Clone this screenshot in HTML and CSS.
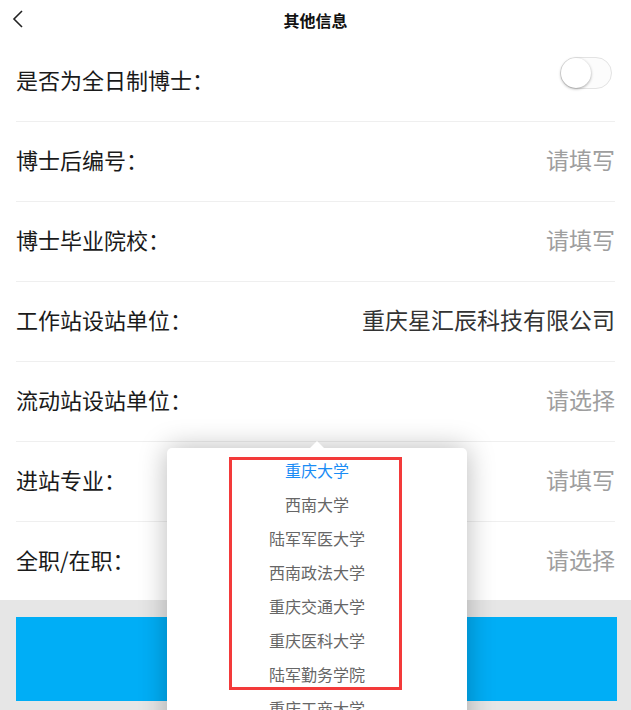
FILE: index.html
```html
<!DOCTYPE html>
<html lang="zh-CN">
<head>
  <meta charset="UTF-8">
  <title>其他信息</title>
  <link rel="stylesheet" href="styles.css">
</head>
<body>

  <div class="cabecera">
    <span class="volver">
      <svg width="12" height="18" viewBox="0 0 12 18"><path d="M10 1 L2 9 L10 17" fill="none" stroke="#222" stroke-width="1.6"/></svg>
    </span>
    <h1>其他信息</h1>
  </div>

  <div class="formulario">
    <div class="fila">
      <span class="etiqueta">是否为全日制博士：</span>
      <span class="interruptor"><span class="bola"></span></span>
    </div>
    <div class="fila">
      <span class="etiqueta">博士后编号：</span>
      <span class="valor vacio">请填写</span>
    </div>
    <div class="fila">
      <span class="etiqueta">博士毕业院校：</span>
      <span class="valor vacio">请填写</span>
    </div>
    <div class="fila">
      <span class="etiqueta">工作站设站单位：</span>
      <span class="valor">重庆星汇辰科技有限公司</span>
    </div>
    <div class="fila">
      <span class="etiqueta">流动站设站单位：</span>
      <span class="valor vacio">请选择</span>
    </div>
    <div class="fila">
      <span class="etiqueta">进站专业：</span>
      <span class="valor vacio">请填写</span>
    </div>
    <div class="fila">
      <span class="etiqueta">全职/在职：</span>
      <span class="valor vacio">请选择</span>
    </div>
  </div>

  <div class="pie">
    <div class="boton"></div>
  </div>

  <div class="desplegable">
    <ul>
      <li class="activo">重庆大学</li>
      <li>西南大学</li>
      <li>陆军军医大学</li>
      <li>西南政法大学</li>
      <li>重庆交通大学</li>
      <li>重庆医科大学</li>
      <li>陆军勤务学院</li>
      <li>重庆工商大学</li>
    </ul>
  </div>

  <div class="marca"></div>

</body>
</html>
```

FILE: styles.css
```css
html, body {
  margin: 0;
  height: 710px;
  overflow: hidden;
}

body {
  font-family: "Noto Sans CJK SC", "Noto Sans", sans-serif;
  background: #e6e6e6;
  color: #222;
  position: relative;
}

.cabecera {
  height: 42px;
  background: #fff;
  display: flex;
  align-items: center;
  justify-content: center;
  position: relative;
}

.cabecera h1 {
  margin: 0 0 3px;
  font-size: 16px;
  font-weight: bold;
  color: #111;
}

.volver {
  position: absolute;
  left: 12px;
  top: 9px;
}

.formulario {
  background: #fff;
  padding: 0 16px;
}

.fila {
  height: 80px;
  box-sizing: border-box;
  padding-bottom: 5px;
  display: flex;
  align-items: center;
  justify-content: space-between;
  border-bottom: 1px solid #efefef;
}

.fila:last-child {
  border-bottom: none;
  height: 78px;
}

.etiqueta {
  font-size: 22px;
  color: #1a1a1a;
}

.valor {
  font-size: 23px;
  color: #333;
}

.valor.vacio {
  color: #9e9e9e;
}

.interruptor {
  width: 50px;
  height: 30px;
  border: 1px solid #e3e3e3;
  border-radius: 16px;
  background: #fcfcfc;
  position: relative;
  margin: 0 3px 12px 0;
}

.bola {
  position: absolute;
  left: 0;
  top: 0;
  width: 30px;
  height: 30px;
  border-radius: 50%;
  background: #fff;
  box-shadow: 0 1px 3px rgba(0, 0, 0, 0.35);
}

.pie {
  padding: 17px 14px 0 16px;
}

.boton {
  height: 84px;
  background: #00aef6;
}

.desplegable {
  position: absolute;
  left: 167px;
  top: 448px;
  width: 300px;
  height: 300px;
  background: #fff;
  border-radius: 5px;
  box-shadow: 0 0 28px rgba(0, 0, 0, 0.28);
}

.desplegable::before {
  content: "";
  position: absolute;
  left: 143px;
  top: -7px;
  border-left: 7px solid transparent;
  border-right: 7px solid transparent;
  border-bottom: 7px solid #fff;
}

.desplegable ul {
  list-style: none;
  margin: 0;
  padding: 5px 0 0;
}

.desplegable li {
  height: 34px;
  line-height: 34px;
  text-align: center;
  font-size: 16px;
  color: #666;
}

.desplegable li.activo {
  color: #1a8cf5;
}

.marca {
  position: absolute;
  left: 229px;
  top: 457px;
  width: 167px;
  height: 227px;
  border: 3px solid #f33a3a;
}
```
